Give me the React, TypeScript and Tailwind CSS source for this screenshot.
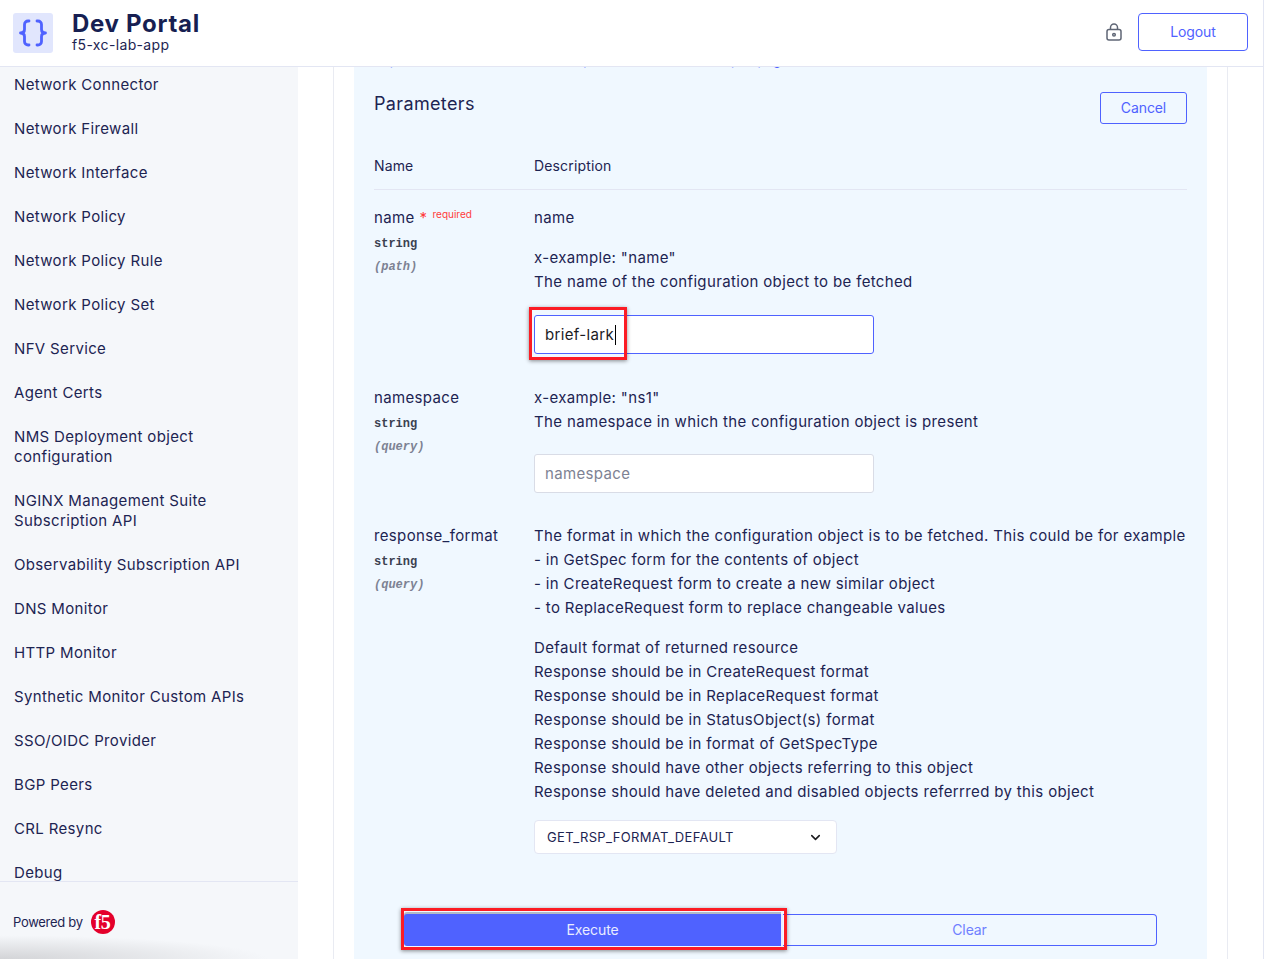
import React from 'react';
import { ChevronDown } from 'lucide-react';

const navItems = [
  'Network Connector',
  'Network Firewall',
  'Network Interface',
  'Network Policy',
  'Network Policy Rule',
  'Network Policy Set',
  'NFV Service',
  'Agent Certs',
  'NMS Deployment object configuration',
  'NGINX Management Suite Subscription API',
  'Observability Subscription API',
  'DNS Monitor',
  'HTTP Monitor',
  'Synthetic Monitor Custom APIs',
  'SSO/OIDC Provider',
  'BGP Peers',
  'CRL Resync',
  'Debug',
];

const formatLines = [
  'Default format of returned resource',
  'Response should be in CreateRequest format',
  'Response should be in ReplaceRequest format',
  'Response should be in StatusObject(s) format',
  'Response should be in format of GetSpecType',
  'Response should have other objects referring to this object',
  'Response should have deleted and disabled objects referrred by this object',
];

function BracesLogo() {
  return (
    <svg width="40" height="40" viewBox="0 0 40 40" fill="none" stroke="#4f62ff" strokeWidth="2.8" strokeLinecap="round" strokeLinejoin="round">
      <path d="M16 8h-1a3.5 3.5 0 0 0-3.5 3.5v5c0 2-1.5 3.5-4 3.5 2.5 0 4 1.5 4 3.5v5a3.5 3.5 0 0 0 3.5 3.5h1" />
      <path d="M24 8h1a3.5 3.5 0 0 1 3.5 3.5v5c0 2 1.5 3.5 4 3.5-2.5 0-4 1.5-4 3.5v5a3.5 3.5 0 0 1-3.5 3.5h-1" />
    </svg>
  );
}

function LockIcon() {
  return (
    <svg width="16" height="18" viewBox="0 0 16 18" fill="none" stroke="#5f6675" strokeWidth="1.5">
      <rect x="1" y="6.5" width="14" height="10.5" rx="2" />
      <path d="M4.5 6.5V4.5a3.5 3.5 0 0 1 7 0v2" />
      <circle cx="8" cy="11.7" r="1.3" />
    </svg>
  );
}

function F5Logo() {
  return (
    <svg width="26" height="26" viewBox="0 0 26 26">
      <circle cx="13" cy="13" r="12" fill="#e4002b" />
      <text x="12.5" y="20" textAnchor="middle" fontFamily="Liberation Serif, serif" fontWeight="700" fontSize="20" fill="#fff">
        f5
      </text>
    </svg>
  );
}

function ParamName({ name, kind, required }: { name: string; kind: string; required?: boolean }) {
  return (
    <div>
      <div className="flex items-start leading-6">
        <span>{name}</span>
        {required && (
          <>
            <span className="ml-[5px] text-[#ff3b3b]">*</span>
            <span className="ml-[5px] text-[10px] leading-4 tracking-normal text-[#ff3b3b]">required</span>
          </>
        )}
      </div>
      <div className="mt-[6px] font-['Liberation_Mono',monospace] text-xs font-bold leading-4 tracking-normal text-[#3b4151]">string</div>
      <div className="mt-[7px] font-['Liberation_Mono',monospace] text-xs font-bold italic leading-4 tracking-normal text-[#7d8293]">({kind})</div>
    </div>
  );
}

export default function App() {
  return (
    <div className="relative flex h-[959px] w-[1264px] flex-col overflow-hidden border-r border-[#e3e6f3] bg-white font-['Inter',sans-serif] text-[15px] tracking-[0.35px] text-[#1d2452]">
      {/* Top bar */}
      <header className="flex h-[67px] shrink-0 items-center justify-between border-b border-[#e3e6f3] pl-[13px] pr-[15px]">
        <div className="flex items-center">
          <div className="h-10 w-10 rounded-[3px] bg-[#e1e6fd]">
            <BracesLogo />
          </div>
          <div className="ml-[19px]">
            <div className="text-2xl font-bold leading-6 tracking-[0.7px] text-[#171f52]">Dev Portal</div>
            <div className="text-sm leading-[18px] text-[#1d2452]">f5-xc-lab-app</div>
          </div>
        </div>
        <div className="mb-[2px] flex items-center">
          <LockIcon />
          <button className="ml-4 h-[38px] w-[110px] rounded-[4px] border border-[#4f62ff] text-sm tracking-[-0.1px] text-[#4f62ff]">Logout</button>
        </div>
      </header>

      <div className="flex min-h-0 flex-1">
        {/* Sidebar */}
        <aside className="relative flex w-[298px] shrink-0 flex-col bg-[#f5f7fa]">
          <nav className="min-h-0 flex-1 overflow-hidden pl-[14px] pr-8 leading-5">
            <div className="-mt-1">
              {navItems.map((item) => (
                <div key={item} className="py-3">
                  {item}
                </div>
              ))}
            </div>
          </nav>
          <div className="flex h-[78px] shrink-0 items-center border-t border-[#e3e6f3] pl-[13px] pt-1 text-[13px] tracking-[-0.3px]">
            <span>Powered by</span>
            <span className="-mt-[2px] ml-[7px]">
              <F5Logo />
            </span>
          </div>
          <div className="absolute bottom-0 left-0 h-[24px] w-[270px] bg-[radial-gradient(ellipse_at_bottom_left,#d3d4d7,#f5f7fa_70%)]" />
        </aside>

        {/* Main column */}
        <main className="min-w-0 flex-1 overflow-hidden px-[35px]">
          <div className="h-full border-x border-[#e9ebf2] px-5">
            <section className="relative h-full bg-[#f0f8ff] px-5">
              <div className="h-[3px] overflow-hidden">
                <p className="-mt-[17px] whitespace-nowrap text-[13px] leading-5 tracking-normal text-[#4f62ff]">
                  Represents the details of the item path and status on the spec page
                </p>
              </div>

              <div className="mt-[22px] flex h-8 items-start justify-between">
                <h2 className="text-lg leading-6">Parameters</h2>
                <button className="h-8 w-[87px] rounded-[3px] border border-[#4f62ff] text-sm tracking-[-0.1px] text-[#4f62ff]">Cancel</button>
              </div>

              <div className="mt-[30px] grid grid-cols-[160px_1fr] border-b border-[#e3e6f3] pb-[11px] text-sm leading-6 tracking-[0.15px]">
                <div>Name</div>
                <div>Description</div>
              </div>

              {/* name */}
              <div className="mt-4 grid grid-cols-[160px_1fr] leading-6">
                <ParamName name="name" kind="path" required />
                <div>
                  <p>name</p>
                  <p className="mt-4">x-example: "name"</p>
                  <p>The name of the configuration object to be fetched</p>
                  <div className="mt-[21px] flex h-[39px] w-[340px] items-center rounded-[3px] border border-[#4f62ff] bg-white px-[10px] text-[#1b1b1f]">
                    <span className="border-r border-black pr-px leading-5">brief-lark</span>
                  </div>
                </div>
              </div>

              {/* namespace */}
              <div className="mt-8 grid grid-cols-[160px_1fr] leading-6">
                <ParamName name="namespace" kind="query" />
                <div>
                  <p>x-example: "ns1"</p>
                  <p>The namespace in which the configuration object is present</p>
                  <input
                    placeholder="namespace"
                    className="mt-5 block h-[39px] w-[340px] rounded-[3px] border border-[#d9dce6] bg-white px-[10px] placeholder:text-[#7d8293]"
                  />
                </div>
              </div>

              {/* response_format */}
              <div className="mt-[31px] grid grid-cols-[160px_1fr] leading-6">
                <ParamName name="response_format" kind="query" />
                <div>
                  <p>The format in which the configuration object is to be fetched. This could be for example</p>
                  <p>- in GetSpec form for the contents of object</p>
                  <p>- in CreateRequest form to create a new similar object</p>
                  <p>- to ReplaceRequest form to replace changeable values</p>
                  <div className="mt-4">
                    {formatLines.map((line) => (
                      <p key={line}>{line}</p>
                    ))}
                  </div>
                  <div className="mt-4 flex h-[34px] w-[303px] items-center justify-between rounded-[4px] border border-[#e3e6f3] bg-white pl-3 pr-[13px] text-[13px]">
                    <span>GET_RSP_FORMAT_DEFAULT</span>
                    <ChevronDown size={15} strokeWidth={2.5} className="text-[#1b1b1f]" />
                  </div>
                </div>
              </div>

              {/* Actions */}
              <div className="ml-[30px] mt-[60px] flex h-8 w-[753px]">
                <button className="w-[377px] rounded-l-[3px] bg-[#4f62ff] text-sm tracking-[-0.1px] text-[#e9ecff] shadow-[0_-2px_0_#b4bac6]">Execute</button>
                <div className="w-[2px] bg-[#e9ecff]" />
                <button className="flex-1 rounded-r-[4px] border border-l-0 border-[#4f62ff] text-sm tracking-[-0.1px] text-[#6f80ff]">Clear</button>
              </div>

              {/* Screenshot annotations */}
              <div className="absolute left-[175px] top-[240px] h-[53px] w-[98px] border-[3px] border-[#fb1c24] shadow-[0_1px_4px_rgba(0,0,0,0.45)]" />
              <div className="absolute left-[47px] top-[841px] h-[42px] w-[386px] border-[3px] border-[#fb1c24] shadow-[0_1px_4px_rgba(0,0,0,0.45)]" />
            </section>
          </div>
        </main>
      </div>
    </div>
  );
}
